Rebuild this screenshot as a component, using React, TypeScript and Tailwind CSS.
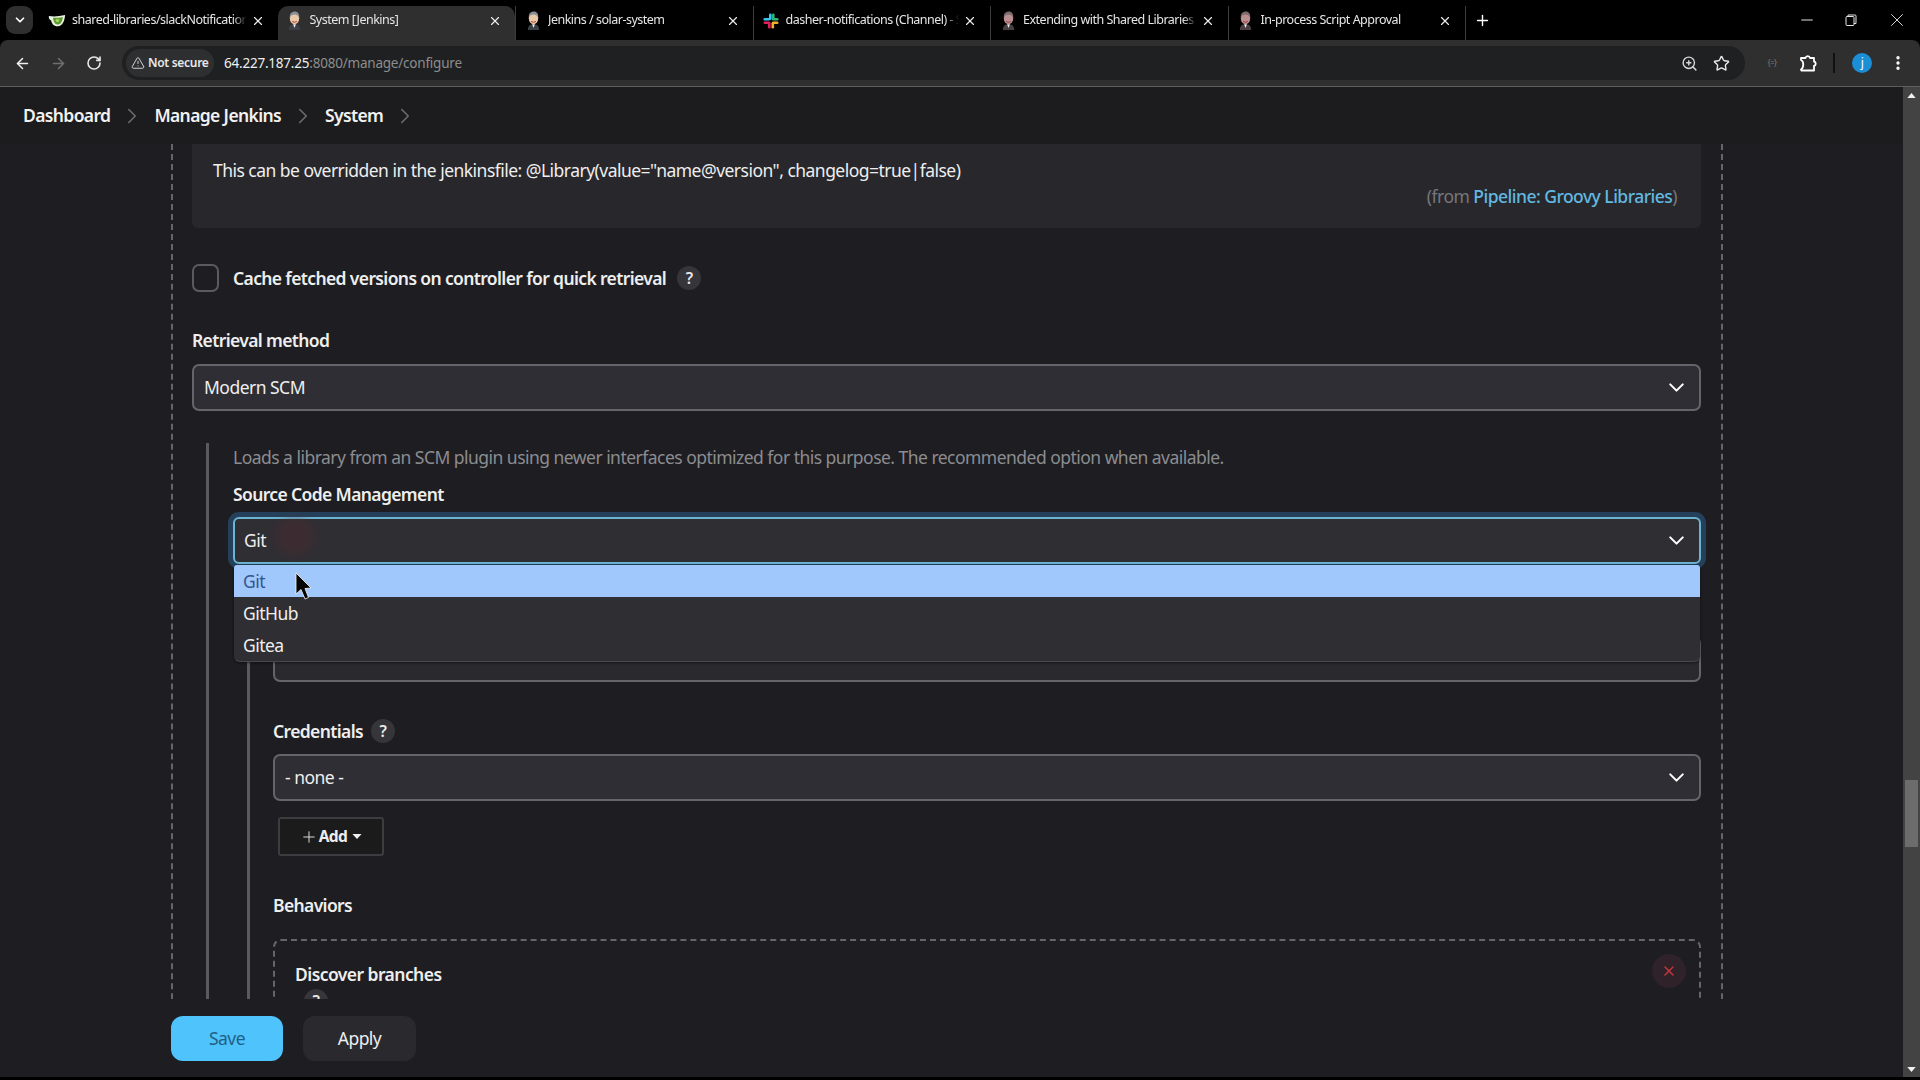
import React from 'react';
import { ArrowLeft, ArrowRight, RotateCw, TriangleAlert, ZoomIn, Star, X, Plus, ChevronRight, ChevronDown, Minus, EllipsisVertical } from 'lucide-react';

const GiteaIcon = () => (
  <svg viewBox="0 0 20 16" className="w-[18px] h-[15px] shrink-0">
    <path d="M1 3 C6 4 12 3.600 19 2 C18.500 9 16 14 11 14.500 C6 14.500 4 11 3.500 8 C1.500 7.500 0.500 5 1 3Z" fill="#e8f3df" />
    <path d="M5.500 5 C9 5 13 4.800 16.500 4 C16 9 14 12.500 10.500 12.500 C7.500 12.500 6 9 5.500 5Z" fill="#5f9a2f" />
    <circle cx="10.500" cy="8" r="2" fill="#9bd35a" />
  </svg>
);

const JenkinsIcon = ({ dim }: { dim?: boolean }) => (
  <svg viewBox="0 0 16 20" className="w-[15px] h-[19px] shrink-0">
    <path d="M2 20 C2 15 5 14 8 14 C11 14 14 15 14 20Z" fill={dim ? '#4a3f44' : '#3b3f46'} />
    <path d="M6.500 14 L8 18 L9.500 14Z" fill="#eee" />
    <ellipse cx="8" cy="7.500" rx="5" ry="6.500" fill={dim ? '#b98f8f' : '#eac9a8'} />
    <path d="M3 7 C2.500 2 6 0.500 8.500 0.500 C11.500 0.500 13.500 3 13 7 C12 4.500 10 3.500 8 3.500 C6 3.500 4 4.500 3 7Z" fill={dim ? '#7c6a6c' : '#8a8f96'} />
    <path d="M5.500 11 Q8 12.800 10.500 11" stroke="#a33" strokeWidth="1" fill="none" />
  </svg>
);

const SlackIcon = () => (
  <svg viewBox="0 0 16 16" className="w-[16px] h-[16px] shrink-0">
    <rect x="6" y="0.500" width="2.600" height="6.500" rx="1.300" fill="#36c5f0" />
    <rect x="0.500" y="5" width="6.500" height="2.600" rx="1.300" fill="#36c5f0" />
    <rect x="9" y="0.500" width="2.600" height="6.500" rx="1.300" fill="#2eb67d" />
    <rect x="9" y="5" width="6.500" height="2.600" rx="1.300" fill="#2eb67d" />
    <rect x="9" y="8.500" width="6.500" height="2.600" rx="1.300" fill="#ecb22e" />
    <rect x="8.500" y="9" width="2.600" height="6.500" rx="1.300" fill="#ecb22e" />
    <rect x="0.500" y="8.500" width="6.500" height="2.600" rx="1.300" fill="#e01e5a" />
    <rect x="5" y="9" width="2.600" height="6.500" rx="1.300" fill="#e01e5a" />
  </svg>
);

const tabs = [
  { title: 'shared-libraries/slackNotification.groovy', icon: <GiteaIcon /> },
  { title: 'System [Jenkins]', icon: <JenkinsIcon />, active: true },
  { title: 'Jenkins / solar-system', icon: <JenkinsIcon /> },
  { title: 'dasher-notifications (Channel) - Slack', icon: <SlackIcon /> },
  { title: 'Extending with Shared Libraries', icon: <JenkinsIcon dim /> },
  { title: 'In-process Script Approval', icon: <JenkinsIcon dim /> },
];

const HelpDot = () => (
  <span className="w-[24px] h-[24px] rounded-full bg-[#35353a] flex items-center justify-center text-[16px] font-semibold text-[#e8e8e8] shrink-0">?</span>
);

const Select = ({ value }: { value: string }) => (
  <div className="h-[47px] rounded-[7px] border-2 border-[#64646a] bg-[#2f2e34] flex items-center justify-between pl-[10px] pr-[10px] text-[#eeeeee]">
    <span>{value}</span>
    <ChevronDown className="w-[25px] h-[25px] text-white" strokeWidth={2} />
  </div>
);

export default function App() {
  return (
    <div className="w-[1920px] h-[1080px] bg-black overflow-hidden flex flex-col font-['Noto_Sans',sans-serif] text-[17.5px] tracking-[-0.03em] pb-[3px]">
      {/* tab strip */}
      <div className="h-[40px] flex items-end shrink-0 text-[12.5px] tracking-[-0.04em] text-[#e6e6e6]">
        <div className="w-[40px] h-[34px] flex items-start pl-[6px]">
          <div className="w-[27px] h-[28px] rounded-[9px] bg-[#2f2f2f] flex items-center justify-center">
            <ChevronDown className="w-[14px] h-[14px] text-white" strokeWidth={3} />
          </div>
        </div>
        {tabs.map((t, i) => (
          <div key={t.title} className={`w-[237.500px] h-[34px] flex items-center pl-[5px] pr-[13px] pb-[5px] ${t.active ? 'bg-[#2f2f2f] rounded-t-[10px]' : ''} ${i > 1 ? 'border-l border-[#3c3c3c]' : ''}`}>
            <span className="w-[24px] flex justify-center shrink-0">{t.icon}</span>
            <span className="flex-1 ml-[3px] whitespace-nowrap overflow-hidden [mask-image:linear-gradient(to_right,black_calc(100%-14px),transparent)]">{t.title}</span>
            <X className="w-[14px] h-[14px] text-[#eeeeee] ml-[4px] shrink-0" strokeWidth={2} />
          </div>
        ))}
        <div className="h-[34px] flex items-center border-l border-[#3c3c3c] pl-[8px] pb-[6px]">
          <Plus className="w-[17px] h-[17px] text-white" strokeWidth={2} />
        </div>
        <div className="h-[40px] ml-auto flex items-center pr-[12px] gap-[29px] text-[#e6e6e6]">
          <Minus className="w-[18px] h-[18px]" strokeWidth={1.500} />
          <svg viewBox="0 0 12 12" className="w-[12px] h-[12px]" fill="none" stroke="currentColor" strokeWidth="1"><rect x="1" y="2.500" width="8" height="9" rx="1" /><path d="M3 2.500 V1 H10 a1 1 0 0 1 1 1 V9.500 H9" /></svg>
          <X className="w-[22px] h-[22px]" strokeWidth={1} />
        </div>
      </div>

      {/* toolbar */}
      <div className="h-[47px] shrink-0 bg-[#2f2f2f] rounded-t-[8px] border-b border-[#5e5e5e] flex items-center pl-[14px] pr-[1px]">
        <ArrowLeft className="w-[17px] h-[17px] text-[#f0f0f0]" strokeWidth={2.200} />
        <ArrowRight className="w-[17px] h-[17px] text-[#6f6f6f] ml-[19px]" strokeWidth={2.200} />
        <RotateCw className="w-[16px] h-[16px] text-[#e8e8e8] ml-[19px]" strokeWidth={2.400} />
        <div className="ml-[20px] w-[1623px] h-[34px] rounded-full bg-[#1f2022] flex items-center pl-[4px] pr-[15px]">
          <div className="h-[28px] w-[88px] rounded-full bg-[#2e2f31] flex items-center gap-[3px] pl-[5px] text-[12px] tracking-[-0.025em] font-semibold text-[#e8e8e8]">
            <TriangleAlert className="w-[14px] h-[14px] shrink-0" strokeWidth={1.500} />
            Not secure
          </div>
          <div className="ml-[10px] text-[13.500px] tracking-[-0.016em] text-[#eeeeee]">
            64.227.187.25<span className="text-[#8d8d8d]">:8080/manage/configure</span>
          </div>
          <ZoomIn className="w-[17px] h-[17px] text-[#d8d8d8] ml-auto" strokeWidth={2} />
          <Star className="w-[17px] h-[17px] text-[#e8e8e8] ml-[15px]" strokeWidth={2} />
        </div>
        <span className="ml-[20px] w-[14px] text-[8px] text-[#777777] text-center">{'{=}'}</span>
        <svg viewBox="0 0 20 20" className="w-[20px] h-[20px] ml-[19px] text-white" fill="none" stroke="currentColor" strokeWidth="1.800" strokeLinejoin="round">
          <path d="M3 5 H7.500 a2.300 2.300 0 0 1 4.500 0 H16 V8.500 a2.200 2.200 0 0 1 0 4.300 V17.500 H3.500 a1.500 1.500 0 0 1 -0.500 -1 C6 15 6 8 3 7 Z" />
        </svg>
        <span className="w-[2px] h-[20px] bg-[#111111] ml-[15px]" />
        <span className="w-[20px] h-[20px] rounded-full bg-[#1a8fd6] ml-[17px] flex items-center justify-center text-[12px] text-white">j</span>
        <EllipsisVertical className="w-[18px] h-[18px] text-white ml-[17px]" strokeWidth={2.500} />
      </div>

      <div className="flex-1 min-h-0 flex">
        <div className="flex-1 min-w-0 flex flex-col bg-[#1e1e22] text-[#eeeeee]">
          {/* breadcrumbs */}
          <div className="h-[57px] shrink-0 bg-[#1c1c1f] flex items-center pl-[23px] font-semibold tracking-[-0.036em] text-[#f2f2f2]">
            <span>Dashboard</span>
            <ChevronRight className="w-[26px] h-[26px] text-[#6c6c6c] mx-[9px]" strokeWidth={1.500} />
            <span>Manage Jenkins</span>
            <ChevronRight className="w-[26px] h-[26px] text-[#6c6c6c] mx-[9px]" strokeWidth={1.500} />
            <span>System</span>
            <ChevronRight className="w-[26px] h-[26px] text-[#6c6c6c] mx-[9px]" strokeWidth={1.500} />
          </div>

          {/* form */}
          <div className="flex-1 min-h-0 overflow-hidden pl-[171px] pr-[180px]">
            <div className="border-x-2 border-dashed border-[#65656a] pl-[19px] pr-[20px]">
              <div className="h-[84px] rounded-b-[6px] bg-[#28282c] px-[21px] pt-[13px]">
                <p className="leading-[26px]">This can be overridden in the jenkinsfile: @Library(value="name@version", changelog=true|false)</p>
                <p className="text-right pr-[3px] leading-[26px] text-[#77777b]">
                  (from <a className="text-[#62b8e0] font-medium">Pipeline: Groovy Libraries</a>)
                </p>
              </div>

              <div className="mt-[36px] h-[28px] flex items-center">
                <span className="w-[27px] h-[28px] rounded-[7px] border-2 border-[#5a5a60] shrink-0" />
                <span className="ml-[14px] font-semibold tracking-[-0.036em]">Cache fetched versions on controller for quick retrieval</span>
                <span className="ml-[11px]"><HelpDot /></span>
              </div>

              <div className="mt-[36px] leading-[24px] font-semibold tracking-[-0.036em]">Retrieval method</div>
              <div className="mt-[12px]"><Select value="Modern SCM" /></div>

              <div className="mt-[32px] ml-[14px] border-l-[3px] border-[#5a5a60] pl-[24px]">
                <div className="pt-[2px] leading-[24px] text-[#8c8c90]">Loads a library from an SCM plugin using newer interfaces optimized for this purpose. The recommended option when available.</div>
                <div className="mt-[13px] leading-[24px] font-semibold tracking-[-0.036em]">Source Code Management</div>

                <div className="relative mt-[11px] z-10">
                  <div className="h-[47px] rounded-[6px] border-2 border-[#6cb4d2] bg-[#2f2e33] ring-[5px] ring-[#24405a] flex items-center justify-between pl-[9px] pr-[10px]">
                    <span>Git</span>
                    <ChevronDown className="w-[25px] h-[25px] text-white" strokeWidth={2} />
                  </div>
                  <span className="absolute left-[42px] top-[0px] w-[40px] h-[38px] rounded-full bg-[#5a2a2e] opacity-30 blur-[5px]" />
                  <div className="absolute left-[1px] right-[1px] top-[48px] h-[97px] rounded-b-[6px] rounded-t-[3px] bg-[#2f2e33] overflow-hidden border-b border-[#47474c] shadow-[0_1px_3px_#00000080]">
                    <div className="h-[32px] bg-[#a0c8fd] text-[#36548a] pl-[9px] leading-[32px]">Git</div>
                    <div className="h-[32px] pl-[9px] leading-[32px]">GitHub</div>
                    <div className="h-[32px] pl-[9px] leading-[32px]">Gitea</div>
                  </div>
                  <svg viewBox="0 0 17 28" className="absolute left-[62px] top-[55px] w-[17px] h-[28px]">
                    <path d="M1 1 L1 22 L6 17.500 L10 27 L13.500 25.500 L10 16.500 L16 16Z" fill="#050505" stroke="#f5f5f5" strokeWidth="0.800" />
                  </svg>
                </div>

                <div className="mt-[16px] ml-[14px] border-l-[3px] border-[#5a5a60] pl-[23px] pt-[56px] pb-[60px]">
                  <div className="h-[46px] rounded-[7px] border-2 border-[#64646a] bg-[#2a2a2e]" />

                  <div className="mt-[35px] h-[28px] flex items-center font-semibold tracking-[-0.036em]">
                    Credentials
                    <span className="ml-[8px]"><HelpDot /></span>
                  </div>
                  <div className="mt-[9px]"><Select value="- none -" /></div>

                  <div className="mt-[16px] ml-[5px] w-[106px] h-[39px] rounded-[3px] border-2 border-[#3d3d41] bg-[#1b1b1c] flex items-center justify-center text-[15.500px] font-bold">
                    <Plus className="w-[18px] h-[18px] text-[#e0e0e0] mr-[1px]" strokeWidth={1.300} />
                    Add
                    <svg viewBox="0 0 11 6" className="w-[10px] h-[5px] ml-[5px]"><path d="M0 0 H11 L5.500 6Z" fill="#f0f0f0" /></svg>
                  </div>

                  <div className="mt-[37px] leading-[24px] font-semibold tracking-[-0.036em]">Behaviors</div>

                  <div className="relative mt-[22px] rounded-[8px] border-2 border-dashed border-[#65656a] pl-[20px] pt-[21px] h-[200px]">
                    <div className="leading-[24px] font-semibold tracking-[-0.032em]">Discover branches</div>
                    <div className="mt-[3px] ml-[9px]"><HelpDot /></div>
                    <span className="absolute right-[13px] top-[13px] w-[34px] h-[34px] rounded-full bg-[#2f2228] flex items-center justify-center">
                      <X className="w-[16px] h-[16px] text-[#c8363c]" strokeWidth={2} />
                    </span>
                  </div>
                </div>
              </div>
            </div>
          </div>

          {/* sticky action bar */}
          <div className="h-[78px] shrink-0 bg-[#1e1e22] pl-[171px] pt-[17px] flex items-start gap-[20px]">
            <button className="w-[112px] h-[45px] rounded-[12px] bg-[#4fc3fb] text-[#1f5f86]">Save</button>
            <button className="w-[113px] h-[45px] rounded-[12px] bg-[#2a2a2e] text-[#eeeeee]">Apply</button>
          </div>
        </div>

        {/* page scrollbar */}
        <div className="w-[17px] shrink-0 bg-[#434343] flex flex-col items-center">
          <svg viewBox="0 0 10 6" className="w-[9px] h-[5px] mt-[6px] shrink-0"><path d="M0 6 L5 0 L10 6Z" fill="#f0f0f0" /></svg>
          <div className="mt-[682px] w-[13px] h-[67px] bg-[#6c6c6c]" />
          <svg viewBox="0 0 10 6" className="w-[9px] h-[5px] mt-auto mb-[5px] shrink-0"><path d="M0 0 L5 6 L10 0Z" fill="#f0f0f0" /></svg>
        </div>
      </div>
    </div>
  );
}
